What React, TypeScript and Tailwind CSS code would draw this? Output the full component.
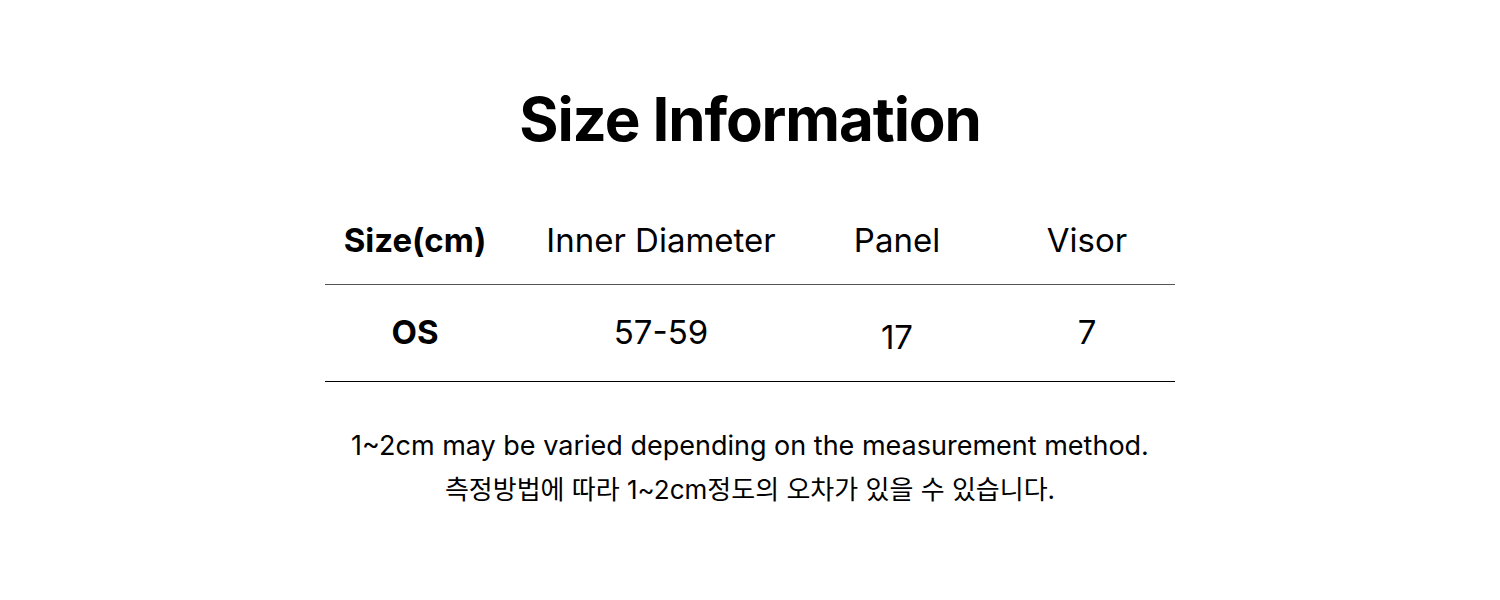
const headers = ['Size(cm)', 'Inner Diameter', 'Panel', 'Visor']

export default function App() {
  return (
    <div className="w-[1500px] h-[600px] bg-white text-black flex flex-col items-center pt-[89px] font-['Inter',sans-serif]">
      <h1 className="text-[60px] leading-[60px] font-bold tracking-[-1.1px]">Size Information</h1>

      <div className="mt-[48px] w-[850px]">
        <div className="grid grid-cols-[180px_312px_160px_198px] h-[88px] items-center border-b border-[#555555] text-[33px]">
          {headers.map((h, i) => (
            <div
              key={h}
              className={`text-center ${i === 0 ? 'font-bold' : 'font-normal'} ${i === 3 ? 'pl-[22px]' : ''}`}
            >
              {h}
            </div>
          ))}
        </div>
        <div className="grid grid-cols-[180px_312px_160px_198px] h-[97px] items-center border-b border-black text-[33px]">
          <div className="text-center font-bold">OS</div>
          <div className="text-center">57-59</div>
          <div className="text-center pt-[10px]">17</div>
          <div className="text-center pl-[22px]">7</div>
        </div>
      </div>

      <div className="mt-[42px] text-center leading-[44px] font-['Inter','Noto_Sans_CJK_KR',sans-serif]">
        <p className="text-[27px]">1~2cm may be varied depending on the measurement method.</p>
        <p className="text-[26px]">측정방법에 따라 1~2cm정도의 오차가 있을 수 있습니다.</p>
      </div>
    </div>
  )
}
